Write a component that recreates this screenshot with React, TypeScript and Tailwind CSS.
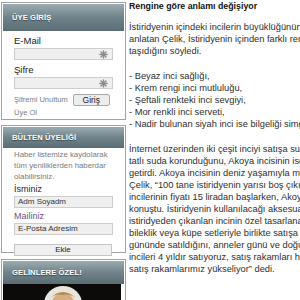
const lines = [
  "İnternet üzerinden iki çeşit inciyi satışa sunduklarını söyleyen Çelik,",
  "tatlı suda korunduğunu, Akoya incisinin ise denizden",
  "getirdi. Akoya incisinin deniz yaşamıyla meydana geldiğini",
  "Çelik, “100 tane istiridyenin yarısı boş çıkıyor” dedi.",
  "incilerinin fiyatı 15 liradan başlarken, Akoya incisinin",
  "konuştu. İstiridyenin kullanılacağı aksesuar",
  "istiridyeden çıkanlan incinin özel tasarlanan",
  "bileklik veya küpe setleriyle birlikte satışa sunulduğunu",
  "gününde satıldığını, anneler günü ve doğum günlerinde",
  "incileri 4 yıldır satıyoruz, satış rakamları her geçen",
  "satış rakamlarımız yükseliyor” dedi.",
];

const colors = [
  "- Beyaz inci sağlığı,",
  "- Krem rengi inci mutluluğu,",
  "- Şeftali renkteki inci sevgiyi,",
  "- Mor renkli inci serveti,",
  "- Nadir bulunan siyah inci ise bilgeliği simgeliyor.",
];

function Star() {
  return (
    <svg width="9" height="9" viewBox="0 0 10 10" className="shrink-0">
      <g stroke="#8c8c8c" strokeWidth="1.6" strokeLinecap="round">
        <line x1="5" y1="1" x2="5" y2="9" />
        <line x1="1" y1="5" x2="9" y2="5" />
        <line x1="2.2" y1="2.2" x2="7.8" y2="7.8" />
        <line x1="7.8" y1="2.2" x2="2.2" y2="7.8" />
      </g>
    </svg>
  );
}

function PanelHead({ title, h }: { title: string; h: string }) {
  return (
    <div
      className={`${h} flex items-center pl-[9px] bg-gradient-to-b from-[#9cadb2] via-[#70838a] to-[#5a6d74] text-[7.6px] font-bold text-white tracking-[0.1px] [text-shadow:0_1px_1px_rgba(0,0,0,0.45)]`}
    >
      {title}
    </div>
  );
}

function Field({ value, star }: { value?: string; star?: boolean }) {
  return (
    <div className="mx-[11px] h-[12px] flex items-center justify-between border border-[#cdcdcd] bg-[#efefef] pl-[3px] pr-[4px] text-[8px] text-[#333]">
      <span>{value}</span>
      {star && <Star />}
    </div>
  );
}

export default function App() {
  return (
    <div className="flex w-[300px] h-[300px] overflow-hidden bg-white font-['Liberation_Sans',Arial,sans-serif]">
      <div className="w-[126px] shrink-0 pl-[1px] pt-[2px] flex flex-col gap-[5px]">
        <div className="border border-[#a3a3a3] p-[1px] h-[124px]">
          <PanelHead title="ÜYE GİRİŞ" h="h-[27px]" />
          <div className="mt-[4px] pl-[11px] text-[9.5px] leading-[12px] text-[#222]">E-Mail</div>
          <div className="mt-[1px]">
            <Field star />
          </div>
          <div className="mt-[4px] pl-[11px] text-[9.5px] leading-[12px] text-[#222]">Şifre</div>
          <div className="mt-[1px]">
            <Field star />
          </div>
          <div className="mt-[5px] flex items-center pl-[11px] gap-[5px]">
            <span className="text-[7.5px] text-[#808080]">Şifremi Unuttum</span>
            <button className="h-[12px] w-[37px] border border-[#a8a8a8] rounded-[2px] bg-[#ededed] text-[8.5px] leading-none text-[#222]">
              Giriş
            </button>
          </div>
          <div className="mt-[2px] pl-[11px] text-[7.5px] leading-[10px] text-[#808080]">Üye Ol</div>
        </div>

        <div className="border border-[#a3a3a3] p-[1px] h-[128px]">
          <PanelHead title="BÜLTEN ÜYELİĞİ" h="h-[21px]" />
          <div className="mt-[1px] pl-[11px] text-[7.8px] leading-[11px] text-[#7a7a7a]">
            Haber listemize kaydolarak
            <br />
            tüm yeniliklerden haberdar
            <br />
            olabilirsiniz.
          </div>
          <div className="mt-[1px] pl-[11px] text-[9px] leading-[12px] text-[#2c2438]">İsminiz</div>
          <div className="mt-[1px]">
            <Field value="Adm Soyadm" />
          </div>
          <div className="mt-[2px] pl-[11px] text-[9px] leading-[12px] text-[#6a4f86]">Mailiniz</div>
          <div className="mt-[1px]">
            <Field value="E-Posta Adresim" />
          </div>
          <button className="mt-[2px] ml-[11px] h-[12px] w-[98px] border border-[#c4c4c4] bg-[#f0f0f0] text-[8px] leading-none text-[#222]">
            Ekle
          </button>
        </div>

        <div className="border border-[#a3a3a3] p-[1px] h-[60px] mt-[1px]">
          <PanelHead title="GELİNLERE ÖZEL!" h="h-[23px]" />
          <svg width="118" height="30" viewBox="0 0 118 30" className="block">
            <rect width="118" height="30" fill="#0d0b0a" />
            <ellipse cx="60" cy="20" rx="19" ry="18" fill="#e9e4dc" />
            <ellipse cx="60" cy="22" rx="12" ry="13" fill="#d6ad84" />
            <path d="M47 14 Q60 2 73 14 Q66 9 60 11 Q53 9 47 14Z" fill="#b88a52" />
          </svg>
        </div>
      </div>

      <div className="pl-[3px] w-[280px] shrink-0 text-[9.3px] leading-[12px] text-[#2e2e2e] whitespace-nowrap">
        <div className="font-bold text-[#111] text-[8.8px]">Rengine göre anlamı değişiyor</div>
        <div className="mt-[9px]">
          <div>İstiridyenin içindeki incilerin büyüklüğünün önemli olduğunu</div>
          <div>anlatan Çelik, İstiridyenin içinden farklı renklerde inci çıktığını,</div>
          <div>taşıdığını söyledi.</div>
        </div>
        <div className="mt-[13px]">
          {colors.map((c) => (
            <div key={c}>{c}</div>
          ))}
        </div>
        <div className="mt-[13px]">
          {lines.map((l) => (
            <div key={l}>{l}</div>
          ))}
        </div>
      </div>
    </div>
  );
}
